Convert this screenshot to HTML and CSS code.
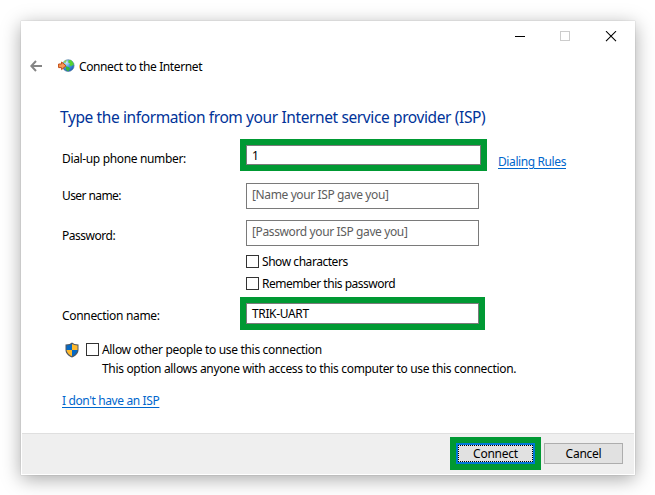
FILE: index.html
```html
<!DOCTYPE html>
<html lang="en">
<head>
<meta charset="utf-8">
<title>Connect to the Internet</title>
<link rel="stylesheet" href="styles.css">
</head>
<body>
<main class="window">
  <div class="controls">
    <svg width="102" height="11" viewBox="0 0 102 11" shape-rendering="crispEdges">
      <path d="M0 5.5h10" stroke="#000"/>
      <rect x="45.500" y=".5" width="9" height="9" fill="none" stroke="#ccc"/>
      <path d="M91 .2l10 10M101 .2l-10 10" stroke="#000" stroke-width="1.1" shape-rendering="auto"/>
    </svg>
  </div>
  <header class="header">
    <svg class="back" width="13" height="12" viewBox="0 0 13 12"><path d="M6 1L1.300 6 6 11M1.500 6H12" fill="none" stroke="#858585" stroke-width="2"/></svg>
    <svg class="globe" width="17" height="14" viewBox="0 0 17 14">
      <defs><radialGradient id="sea" cx=".35" cy=".25" r=".85"><stop offset="0" stop-color="#cfeafa"/><stop offset=".45" stop-color="#429be6"/><stop offset="1" stop-color="#1a4cae"/></radialGradient></defs>
      <circle cx="10.200" cy="6.600" r="5.900" fill="url(#sea)" stroke="#47759b" stroke-width=".6"/>
      <path d="M10.500 1.200l2.500-.2 2.400 2.900.3 3-1.500-.8-1 1.500-2-1.700 1-1.500-2-1z" fill="#56d32f"/>
      <path d="M7.500 7l3.500 1.200 1 1.500-1.800 2.500-2-1.200z" fill="#38b935"/>
      <path d="M5.200 3.200l2-2 1.300.4-1 2.400z" fill="#8cd45a"/>
      <path d="M.6 5h3V3L8 6.800 3.600 10.600V8.600h-3z" fill="#f79a58" stroke="#c24a12"/>
    </svg>
    <span class="t title">Connect to the Internet</span>
  </header>
  <h1 class="t heading">Type the information from your Internet service provider (ISP)</h1>
  <form class="form">
    <div class="row phone">
      <label class="t l-phone">Dial-up phone number:</label>
      <div class="mark"><div class="field"><span class="t">1</span></div></div>
      <a class="t link rules">Dialing Rules</a>
    </div>
    <div class="row user">
      <label class="t l-user">User name:</label>
      <div class="field hint"><span class="t h-name">[Name your ISP gave you]</span></div>
    </div>
    <div class="row pass">
      <label class="t l-pass">Password:</label>
      <div class="field hint"><span class="t h-pass">[Password your ISP gave you]</span></div>
    </div>
    <div class="check show"><i class="box"></i><span class="t c-show">Show characters</span></div>
    <div class="check remember"><i class="box"></i><span class="t c-remember">Remember this password</span></div>
    <div class="row name">
      <label class="t l-conn">Connection name:</label>
      <div class="mark"><div class="field"><span class="t trik">TRIK-UART</span></div></div>
    </div>
    <div class="check allow">
      <svg class="shield" width="14" height="16" viewBox="0 0 14 16">
        <path d="M7 .5L9.500 2l4 .6V8c0 3.500-3 6-6.500 7.500C3.500 14 .5 11.500.5 8V2.600l4-.6z" fill="#505860"/>
        <path d="M7 2v6H1.500V3.500l3-.6z" fill="#0669c4"/>
        <path d="M7 2v6h5.500V3.500l-3-.6z" fill="#ffba2e"/>
        <path d="M1.500 8H7v6.300C4.200 13 1.900 11 1.500 8z" fill="#ffba2e"/>
        <path d="M12.500 8H7v6.300c2.800-1.300 5.100-3.300 5.500-6.300z" fill="#0669c4"/>
      </svg>
      <i class="box"></i><span class="t c-allow">Allow other people to use this connection</span>
    </div>
    <p class="t note">This option allows anyone with access to this computer to use this connection.</p>
    <a class="t link no-isp">I don't have an ISP</a>
  </form>
  <footer class="footer">
    <div class="mark go"><div class="button primary"><span class="t focus">Connect</span></div></div>
    <div class="button"><span class="t">Cancel</span></div>
  </footer>
</main>
</body>
</html>
```
FILE: styles.css
```css
* { box-sizing: border-box; }
body { margin: 0; padding: 21px 20px 20px 21px; height: 495px; overflow: hidden; background: #fff; color: #000; font: 12px/16px "Noto Sans", "Open Sans", sans-serif; }
.window { width: 614px; height: 454px; display: flex; flex-direction: column; background: #fff; box-shadow: 0 0 1px rgba(0,0,0,.25), 0 4px 18px rgba(0,0,0,.35); }
.t { white-space: nowrap; letter-spacing: -.25px; }
.controls { height: 30px; padding: 10px 18px 0 0; display: flex; justify-content: flex-end; flex: none; }
.header { height: 30px; display: flex; align-items: center; padding-left: 9px; flex: none; }
.globe { margin: 0 0 0 15px; }
.title { margin: 2px 0 0 4px; letter-spacing: -.39px; }
.heading { margin: 20px 0 0 39px; height: 32px; font-size: 15.5px; line-height: 32px; font-weight: 400; color: #003399; letter-spacing: -.39px; flex: none; }
.form { display: flex; flex-direction: column; margin: 6px 0 0 41px; height: 294px; flex: none; }
.row { display: flex; flex: none; }
.row label { width: 184px; flex: none; }
.field { width: 233px; height: 26px; border: 1px solid #7a7a7a; background: #fff; padding: 3px 5px; flex: none; }
.field span { display: block; }
.hint { color: #5d5d5d; }
.h-name, .h-pass { letter-spacing: -.38px; }
.mark { border: 6px solid #009933; }
.mark .field { height: 21px; padding-top: 2px; }
.row .mark { margin-left: -6px; }
.phone { height: 32px; }
.phone .mark { width: 247px; height: 32px; }
.phone .field { width: 235px; height: 20px; }
.phone label { padding-top: 12px; }
.l-phone { letter-spacing: -.35px; }
.rules { margin: 15px 0 0 11px; letter-spacing: -.4px; }
.user { margin-top: 12px; height: 26px; }
.user label { padding-top: 5px; }
.l-user { letter-spacing: -.58px; }
.pass { margin-top: 11px; height: 26px; }
.pass label { padding-top: 8px; }
.l-pass { letter-spacing: -.48px; }
.check { display: flex; align-items: center; height: 13px; flex: none; margin-left: 184px; }
.box { width: 13px; height: 13px; border: 1px solid #333; background: #fff; margin-right: 3px; flex: none; }
.show { margin-top: 9px; }
.c-show { letter-spacing: -.45px; }
.remember { margin-top: 9px; }
.c-remember { letter-spacing: -.48px; }
.name { margin-top: 7px; height: 33px; }
.name .mark { height: 33px; }
.name label { padding-top: 11px; }
.l-conn { letter-spacing: -.32px; }
.trik { letter-spacing: -.36px; }
.allow { margin: 13px 0 0 3px; }
.c-allow { letter-spacing: -.32px; }
.shield { margin-right: 7px; flex: none; }
.note { margin: 5px 0 0 40px; letter-spacing: -.33px; }
.link { color: #0066cc; text-decoration: underline; text-underline-offset: 2px; }
.no-isp { margin-top: 16px; align-self: flex-start; letter-spacing: -.38px; }
.footer { height: 41px; margin: auto 1px 1px; border-top: 1px solid #dfdfdf; background: #efefef; display: flex; justify-content: flex-end; align-items: flex-start; padding: 3px 11px 0 0; flex: none; }
.button { width: 79px; height: 21px; margin-top: 6px; border: 1px solid #adadad; background: #e1e1e1; display: flex; justify-content: center; line-height: 19px; }
.go { margin-right: 3px; }
.primary { margin: 0; border: 2px solid #0078d7; }
.focus { flex: 1; border: 1px dotted #000; text-align: center; line-height: 15px; }
```
